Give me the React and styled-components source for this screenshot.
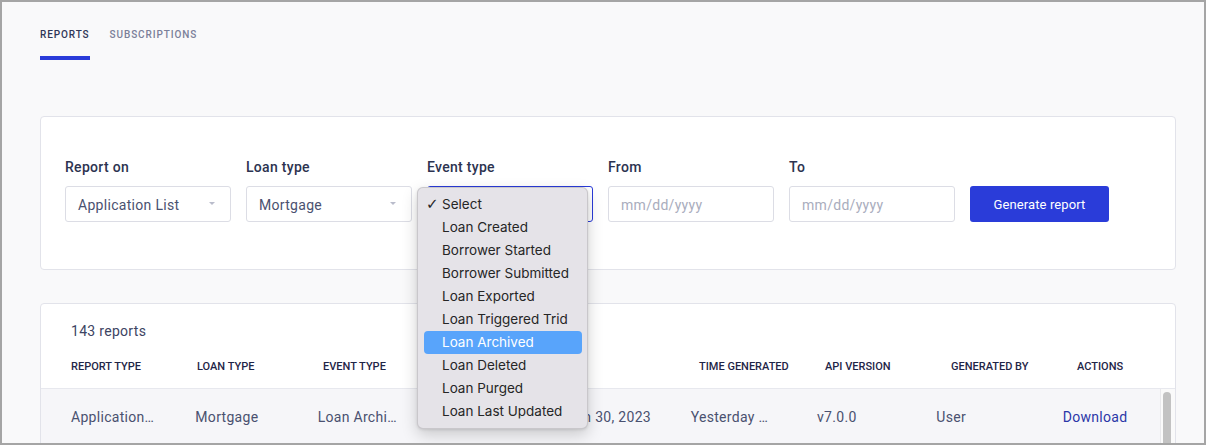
import React from "react";
import styled, { createGlobalStyle } from "styled-components";

const GlobalStyle = createGlobalStyle`
  html, body {
    margin: 0;
    padding: 0;
    background: #f9f9fa;
  }
  * {
    box-sizing: border-box;
  }
`;

const Frame = styled.div`
  width: 1206px;
  height: 445px;
  border: 2px solid #a5a5a5;
  background: #f9f9fa;
  overflow: hidden;
  font-family: Roboto, "Liberation Sans", sans-serif;
  padding: 0 28px 0 38px;
`;

const Tabs = styled.div`
  display: flex;
  gap: 20px;
  padding-top: 26px;
`;

const Tab = styled.div`
  font-size: 10px;
  line-height: 14px;
  font-weight: 500;
  letter-spacing: 0.9px;
  text-transform: uppercase;
  color: ${(p) => (p.active ? "#2f3657" : "#7b8099")};
  padding-bottom: 14px;
  border-bottom: 4px solid ${(p) => (p.active ? "#2a3bd9" : "transparent")};
`;

const Card = styled.div`
  background: #fff;
  border: 1px solid #e2e3ea;
  border-radius: 4px;
`;

const FilterCard = styled(Card)`
  margin-top: 56px;
  padding: 40px 24px 47px;
  display: flex;
  align-items: flex-end;
  gap: 15px;
  position: relative;
  z-index: 2;
`;

const Field = styled.div`
  width: 166px;
  position: relative;
`;

const Label = styled.div`
  font-size: 14px;
  line-height: 21px;
  font-weight: 500;
  color: #2c3350;
  margin-bottom: 8px;
  letter-spacing: 0.3px;
`;

const SelectBox = styled.div`
  height: 36px;
  border: 1px solid ${(p) => (p.focused ? "#2a3bd9" : "#dcdde5")};
  border-radius: 3px;
  background: #fff;
  display: flex;
  align-items: center;
  justify-content: space-between;
  padding: 1px 15px 0 12px;
  font-size: 14px;
  letter-spacing: 0.3px;
  color: #4a5170;
`;

const Caret = styled.span`
  width: 0;
  height: 0;
  border-left: 3px solid transparent;
  border-right: 3px solid transparent;
  border-top: 3px solid #b9bccb;
  margin-top: -3px;
`;

const DateInput = styled.input`
  width: 100%;
  height: 36px;
  border: 1px solid #dcdde5;
  border-radius: 3px;
  background: #fff;
  padding: 1px 12px 0;
  font-family: Roboto, "Liberation Sans", sans-serif;
  font-size: 14px;
  letter-spacing: 0.3px;
  color: #4a5170;
  outline: none;
  &::placeholder {
    color: #a9adbd;
  }
`;

const Button = styled.button`
  width: 139px;
  height: 36px;
  border: none;
  border-radius: 3px;
  background: #2a3cd9;
  color: #fff;
  font-family: Roboto, "Liberation Sans", sans-serif;
  font-size: 13px;
  letter-spacing: 0.1px;
  padding-top: 1px;
  cursor: pointer;
`;

const Menu = styled.ul`
  position: absolute;
  left: -10px;
  top: 30px;
  width: 171px;
  margin: 0;
  padding: 5px 5px 5px 6px;
  list-style: none;
  background: #e5e3e8;
  border: 1px solid rgba(0, 0, 0, 0.12);
  border-radius: 6px;
  box-shadow: 0 6px 16px rgba(0, 0, 0, 0.18), 0 1px 3px rgba(0, 0, 0, 0.1);
  font-family: Inter, "Liberation Sans", sans-serif;
  font-size: 13.5px;
  z-index: 5;
`;

const MenuItem = styled.li`
  height: 23px;
  line-height: 23px;
  border-radius: 4px;
  padding-left: 18px;
  position: relative;
  color: ${(p) => (p.highlighted ? "#fff" : "#262626")};
  background: ${(p) => (p.highlighted ? "#58a4fb" : "transparent")};
  white-space: nowrap;
`;

const Check = styled.span`
  position: absolute;
  left: 2px;
  top: 0;
  font-size: 15px;
  font-family: "DejaVu Sans", sans-serif;
`;

const TableCard = styled(Card)`
  margin-top: 33px;
  padding-top: 17px;
`;

const Count = styled.div`
  font-size: 14px;
  line-height: 20px;
  letter-spacing: 0.3px;
  color: #3d4463;
  padding-left: 30px;
`;

const columns = "repeat(3, 1fr) 2fr repeat(4, 1fr)";

const HeaderRow = styled.div`
  display: grid;
  grid-template-columns: ${columns};
  height: 45px;
  margin-top: 3px;
  padding-top: 1px;
  align-items: center;
  border-bottom: 1px solid #e7e8ee;
`;

const HeadCell = styled.div`
  padding-left: ${(p) => p.pad || 30}px;
  font-size: 11px;
  font-weight: 500;
  text-transform: uppercase;
  color: #1f2547;
  white-space: nowrap;
`;

const Body = styled.div`
  display: flex;
  height: 60px;
`;

const Rows = styled.div`
  flex: 1;
`;

const Row = styled.div`
  display: grid;
  grid-template-columns: ${columns};
  height: 54px;
  padding-top: 1px;
  align-items: center;
  background: #f6f6f9;
`;

const Cell = styled.div`
  padding: 0 ${(p) => (p.end === undefined ? 12 : p.end)}px 0
    ${(p) => p.pad || 30}px;
  font-size: 14px;
  letter-spacing: 0.3px;
  color: #4a5170;
  white-space: nowrap;
  overflow: hidden;
  text-overflow: ellipsis;
`;

const DownloadLink = styled.a`
  color: #2b37a8;
  text-decoration: none;
  border-bottom: 1px solid #2b37a8;
  padding-bottom: 3px;
`;

const ScrollTrack = styled.div`
  width: 15px;
  border-left: 1px solid #e9e9ec;
  background: #fafafa;
  padding: 3px 0 0 2px;
`;

const ScrollThumb = styled.div`
  width: 8px;
  height: 80px;
  border-radius: 4px;
  background: #c2c2c2;
`;

const eventTypes = [
  "Select",
  "Loan Created",
  "Borrower Started",
  "Borrower Submitted",
  "Loan Exported",
  "Loan Triggered Trid",
  "Loan Archived",
  "Loan Deleted",
  "Loan Purged",
  "Loan Last Updated",
];

const headers = [
  "Report type",
  "Loan type",
  "Event type",
  "Date range",
  "Time generated",
  "API version",
  "Generated by",
  "Actions",
];

export default function App() {
  return (
    <>
      <GlobalStyle />
      <Frame>
        <Tabs>
          <Tab active>Reports</Tab>
          <Tab>Subscriptions</Tab>
        </Tabs>

        <FilterCard>
          <Field>
            <Label>Report on</Label>
            <SelectBox>
              Application List
              <Caret />
            </SelectBox>
          </Field>
          <Field>
            <Label>Loan type</Label>
            <SelectBox>
              Mortgage
              <Caret />
            </SelectBox>
          </Field>
          <Field>
            <Label>Event type</Label>
            <SelectBox focused>
              Select
              <Caret />
            </SelectBox>
            <Menu>
              {eventTypes.map((t, i) => (
                <MenuItem key={t} highlighted={t === "Loan Archived"}>
                  {i === 0 && <Check>✓</Check>}
                  {t}
                </MenuItem>
              ))}
            </Menu>
          </Field>
          <Field>
            <Label>From</Label>
            <DateInput placeholder="mm/dd/yyyy" />
          </Field>
          <Field>
            <Label>To</Label>
            <DateInput placeholder="mm/dd/yyyy" />
          </Field>
          <Button>Generate report</Button>
        </FilterCard>

        <TableCard>
          <Count>143 reports</Count>
          <HeaderRow>
            {headers.map((h, i) => (
              <HeadCell key={h} pad={i > 3 ? 28 : 30}>
                {h}
              </HeadCell>
            ))}
          </HeaderRow>
          <Body>
            <Rows>
              <Row>
                <Cell end={8}>Application List</Cell>
                <Cell>Mortgage</Cell>
                <Cell pad={28}>Loan Archived</Cell>
                <Cell end={0}>January 01, 2023 - Jun 30, 2023</Cell>
                <Cell pad={28}>Yesterday at 3:45 PM</Cell>
                <Cell>v7.0.0</Cell>
                <Cell pad={25}>User</Cell>
                <Cell pad={27}>
                  <DownloadLink href="#">Download</DownloadLink>
                </Cell>
              </Row>
            </Rows>
            <ScrollTrack>
              <ScrollThumb />
            </ScrollTrack>
          </Body>
        </TableCard>
      </Frame>
    </>
  );
}
